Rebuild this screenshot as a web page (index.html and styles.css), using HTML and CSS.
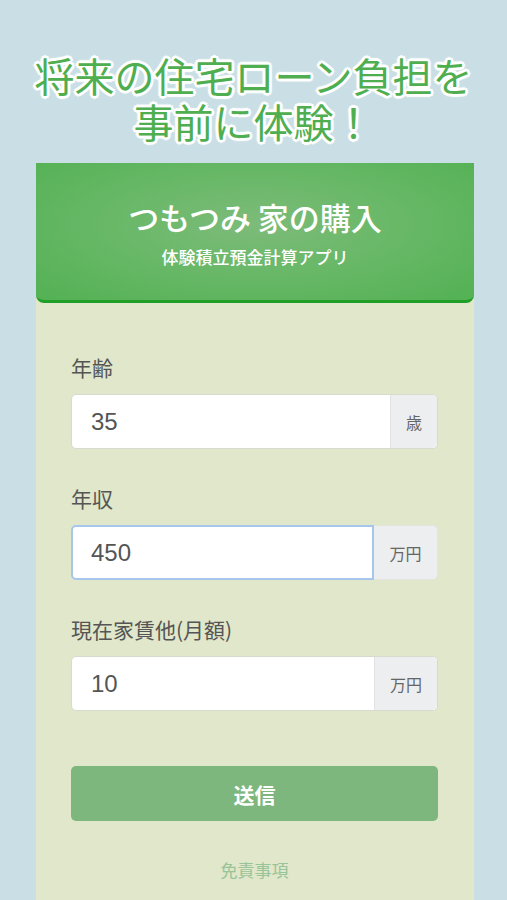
FILE: index.html
```html
<!DOCTYPE html>
<html lang="ja">

<head>
    <meta charset="UTF-8">
    <meta name="viewport" content="width=device-width, initial-scale=1.0">
    <title>つもつみ 家の購入</title>
    <link rel="stylesheet" href="styles.css">
</head>

<body>
    <h1 class="catch">将来の住宅ローン負担を<br>事前に体験！</h1>
    <div class="card">
        <div class="head">
            <h2 class="app-name">つもつみ 家の購入</h2>
            <p class="app-sub">体験積立預金計算アプリ</p>
        </div>
        <form class="form">
            <label class="label">年齢</label>
            <div class="group">
                <input class="inp" type="text" value="35">
                <span class="unit unit-s">歳</span>
            </div>
            <label class="label">年収</label>
            <div class="group focus">
                <input class="inp" type="text" value="450">
                <span class="unit">万円</span>
            </div>
            <label class="label">現在家賃他(月額)</label>
            <div class="group">
                <input class="inp" type="text" value="10">
                <span class="unit">万円</span>
            </div>
            <button class="btn" type="button">送信</button>
            <a class="note">免責事項</a>
        </form>
    </div>
</body>

</html>
```

FILE: styles.css
```css
* {
    padding: 0;
    margin: 0;
    box-sizing: border-box;
}

body {
    background-color: #cadfe5;
    font-family: "Noto Sans CJK JP", "Noto Sans", sans-serif;
    width: 507px;
    height: 900px;
    overflow: hidden;
}

.catch {
    padding-top: 52px;
    font-size: 40px;
    line-height: 46px;
    font-weight: 400;
    text-align: center;
    color: #4fae4f;
    text-shadow: 2px 0 0 #fff, -2px 0 0 #fff, 0 2px 0 #fff, 0 -2px 0 #fff,
        2px 2px 0 #fff, -2px -2px 0 #fff, 2px -2px 0 #fff, -2px 2px 0 #fff,
        3px 0 1px #fff, -3px 0 1px #fff, 0 3px 1px #fff, 0 -3px 1px #fff;
}

.card {
    width: 438px;
    margin: 19px 0 0 36px;
    height: 737px;
    background-color: #e0e7ca;
}

.head {
    height: 140px;
    background: radial-gradient(ellipse at 50% 45%, #7dbb7a 0%, #69b868 45%, #53b153 100%);
    border-bottom: 3px solid #1f9f26;
    border-radius: 0 0 8px 8px;
    text-align: center;
    color: #fff;
    padding-top: 34px;
}

.app-name {
    font-size: 31px;
    line-height: 40px;
    font-weight: 500;
}

.app-sub {
    font-size: 17px;
    line-height: 22px;
    margin-top: 9px;
    font-weight: 500;
}

.form {
    display: flex;
    flex-direction: column;
    padding: 50px 36px 0 35px;
}

.label {
    font-size: 21px;
    line-height: 28px;
    color: #555;
    margin-bottom: 13px;
}

.group {
    display: flex;
    height: 55px;
    margin-bottom: 35px;
    border-radius: 5px;
    border: 1px solid #d6dbd0;
    background-color: #fff;
}

.inp {
    flex: 1;
    min-width: 0;
    border: none;
    outline: none;
    background: transparent;
    padding-left: 19px;
    font-family: "Liberation Sans", "Noto Sans", sans-serif;
    font-size: 24px;
    color: #555;
    border-radius: 5px 0 0 5px;
}

.focus {
    background-color: #eceef0;
    border-color: #e2e5e0;
}

.focus .inp {
    background-color: #fff;
    border: 2px solid #a7c6ec;
    margin: -1px 0 -1px -1px;
    padding-left: 18px;
}

.unit {
    width: 63px;
    display: flex;
    align-items: center;
    justify-content: center;
    background-color: #eceef0;
    border-left: 1px solid #e0e2e4;
    border-radius: 0 5px 5px 0;
    font-size: 16px;
    color: #666;
}

.focus .unit {
    border-left: none;
}

.unit-s {
    width: 47px;
}

.btn {
    margin-top: 20px;
    height: 55px;
    border: none;
    border-radius: 5px;
    background-color: #7db77d;
    color: #fff;
    font-family: "Noto Sans CJK JP", sans-serif;
    font-size: 21px;
    font-weight: 700;
}

.note {
    margin-top: 36px;
    text-align: center;
    font-size: 17px;
    color: #99c398;
}
```
